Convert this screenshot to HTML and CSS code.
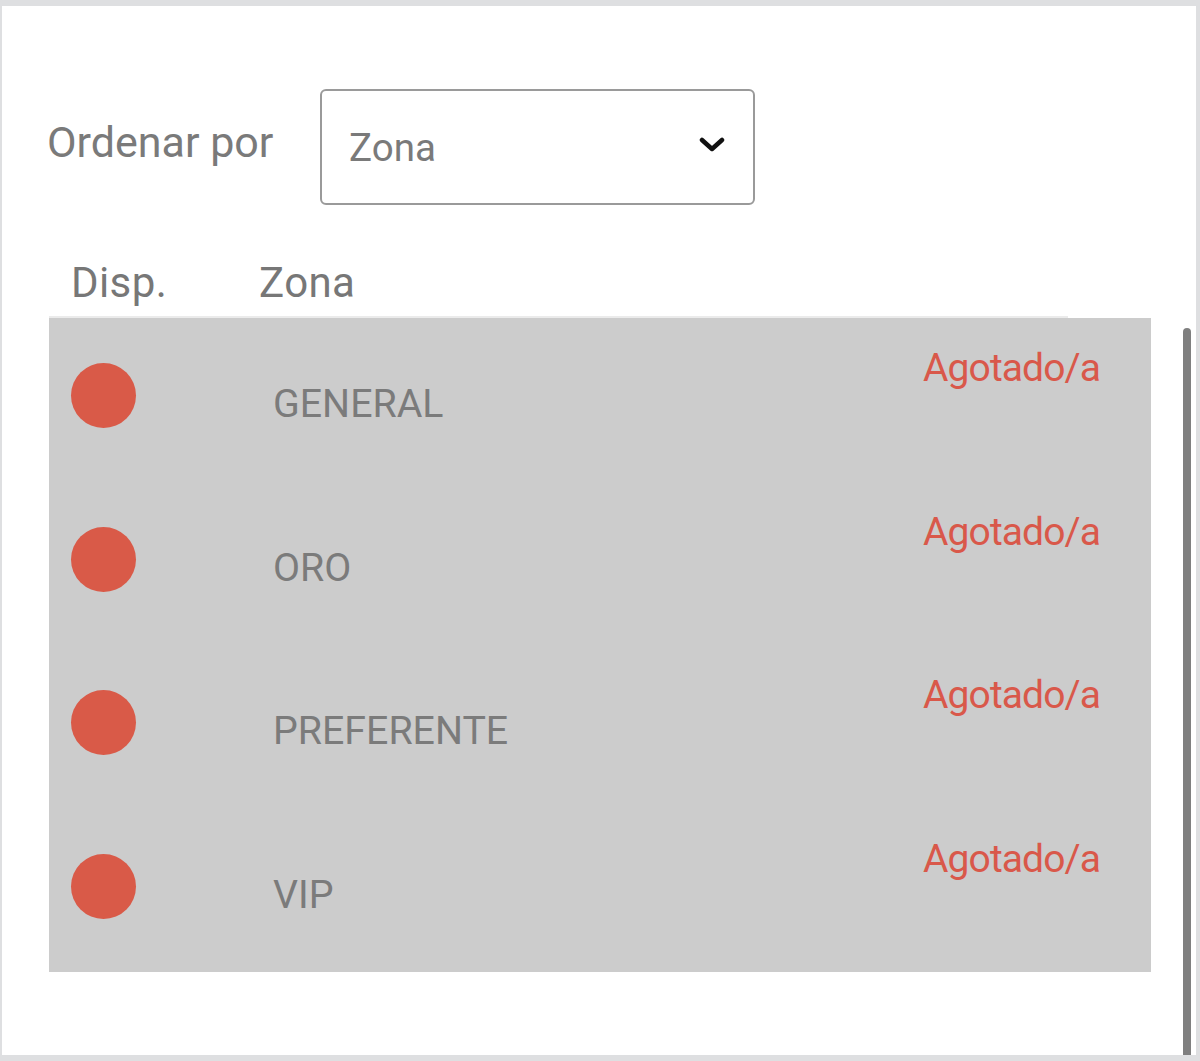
FILE: index.html
```html
<!DOCTYPE html>
<html lang="es">
<head>
<meta charset="utf-8">
<title>Zonas</title>
<link rel="stylesheet" href="styles.css">
</head>
<body>
<div class="frame">
  <div class="sort">
    <span class="sort-label">Ordenar por</span>
    <div class="select">
      <span class="select-value">Zona</span>
      <svg class="chevron" width="26" height="16" viewBox="0 0 26 16"><path d="M3 3 L13 12 L23 3" fill="none" stroke="#111" stroke-width="4.5" stroke-linecap="round" stroke-linejoin="round"/></svg>
    </div>
  </div>
  <div class="table">
    <div class="thead">
      <span class="th th-disp">Disp.</span>
      <span class="th th-zone">Zona</span>
    </div>
    <div class="tbody">
      <div class="row"><span class="dot"></span><span class="zone">GENERAL</span><span class="status">Agotado/a</span></div>
      <div class="row"><span class="dot"></span><span class="zone">ORO</span><span class="status">Agotado/a</span></div>
      <div class="row"><span class="dot"></span><span class="zone">PREFERENTE</span><span class="status">Agotado/a</span></div>
      <div class="row"><span class="dot"></span><span class="zone">VIP</span><span class="status">Agotado/a</span></div>
    </div>
  </div>
  <div class="scrollbar"></div>
</div>
</body>
</html>
```

FILE: styles.css
```css
* { box-sizing: border-box; }
html, body { margin: 0; padding: 0; }
body {
  background: #dedfe1;
  font-family: Roboto, "Noto Sans", Arial, sans-serif;
  width: 1200px;
  height: 1061px;
  overflow: hidden;
}
.frame {
  position: relative;
  margin: 6px 4px 0 2px;
  height: 1049px;
  background: #ffffff;
  overflow: hidden;
}
.sort {
  display: flex;
  align-items: flex-start;
  padding-top: 83px;
  padding-left: 45px;
}
.sort-label {
  font-size: 43px;
  line-height: 48px;
  color: #7a7a7a;
  margin-top: 29px;
  width: 273px;
}
.select {
  width: 435px;
  height: 116px;
  border: 2px solid #9a9a9a;
  border-radius: 6px;
  display: flex;
  align-items: center;
  justify-content: space-between;
  padding: 0 29px 0 27px;
}
.select-value {
  font-size: 38.5px;
  line-height: 44px;
  color: #7a7a7a;
  margin-top: 2px;
}
.chevron { display: block; margin-top: -4px; margin-right: -1px; }
.table {
  margin-left: 47px;
  width: 1102px;
}
.thead {
  width: 1019px;
  height: 113px;
  border-bottom: 2px solid #ebebeb;
  display: flex;
  padding-top: 54px;
}
.th {
  font-size: 42px;
  line-height: 48px;
  color: #777777;
  letter-spacing: 0.4px;
}
.th-disp { width: 210px; padding-left: 22px; }
.tbody { background: #cccccc; }
.row {
  height: 163.5px;
  display: flex;
  align-items: flex-start;
}
.dot {
  width: 65px;
  height: 65px;
  border-radius: 50%;
  background: #d95a48;
  margin: 45px 0 0 22px;
  flex: none;
}
.zone {
  font-size: 39.3px;
  line-height: 48px;
  color: #7b7b7b;
  margin: 62px 0 0 137px;
  flex: 1;
}
.status {
  font-size: 39px;
  line-height: 48px;
  color: #d9584a;
  letter-spacing: -0.9px;
  margin: 26px 51px 0 0;
}
.scrollbar {
  position: absolute;
  left: 1181px;
  top: 322px;
  width: 8px;
  height: 740px;
  background: #7f7f7f;
  border-radius: 4px 4px 0 0;
}
```
